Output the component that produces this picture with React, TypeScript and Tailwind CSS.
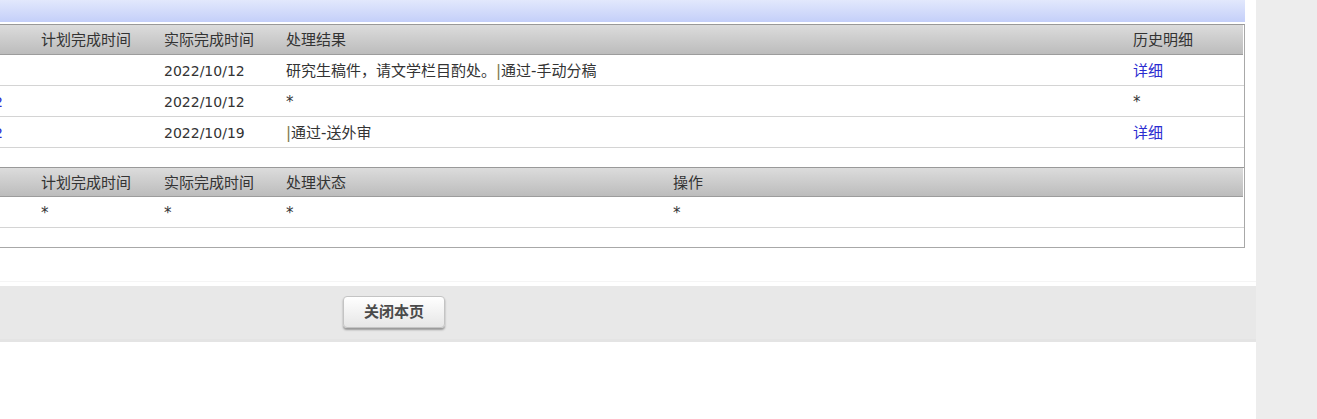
import React from "react";

const FONT = { fontFamily: '"DejaVu Sans", "Noto Sans CJK SC", sans-serif' };

const cols1 = "grid grid-cols-[41px_123px_122px_847px_1fr]";
const cols2 = "grid grid-cols-[41px_123px_122px_387px_1fr]";

function Clip({ text }: { text?: string }) {
  return (
    <div className="flex justify-end overflow-hidden whitespace-nowrap">
      {text ? <span className="mr-[38px] text-[14px] text-[#2b2bd0]">{text}</span> : null}
    </div>
  );
}

function Header({ cols, labels }: { cols: string; labels: string[] }) {
  return (
    <div
      className={`${cols} items-center pt-[2px] border-b border-[#9c9c9c] bg-gradient-to-b from-[#dcdcdc] to-[#bcbcbc] text-[#333] mr-[1px]`}
    >
      <div />
      {labels.map((l, i) => (
        <div key={i} className="whitespace-nowrap">
          {l}
        </div>
      ))}
    </div>
  );
}

export default function App() {
  const rows1 = [
    { left: "", actual: "2022/10/12", result: "研究生稿件，请文学栏目酌处。|通过-手动分稿", link: true },
    { left: "2022/10/12", actual: "2022/10/12", result: "*", link: false },
    { left: "2022/10/12", actual: "2022/10/19", result: "|通过-送外审", link: true },
  ];
  return (
    <div className="flex w-[1317px] h-[419px] bg-white overflow-hidden text-[15px] text-[#333]" style={FONT}>
      <div className="w-[1256px] flex flex-col">
        <div className="w-[1245px]">
          <div className="h-[22px] bg-gradient-to-b from-[#e2e8fc] to-[#c4cff9]" />
          <div className="h-[2px] bg-white" />
          <div className="border-t border-t-[#999] border-r border-r-[#a8a8a8] border-b border-b-[#a8a8a8]">
            {/* table 1 */}
            <Header cols={`${cols1} h-[30px]`} labels={["计划完成时间", "实际完成时间", "处理结果", "历史明细"]} />
            {rows1.map((r, i) => (
              <div key={i} className={`${cols1} h-[31px] items-center pt-[2px] border-b border-[#d4d4d4]`}>
                <Clip text={r.left} />
                <div />
                <div className="text-[14px]">{r.actual}</div>
                <div className="whitespace-nowrap">
                  {r.result.split("|").map((part, j) =>
                    j === 0 ? (
                      <span key={j}>{part}</span>
                    ) : (
                      <span key={j}>
                        <span className="text-[#7d7443]">|</span>
                        {part}
                      </span>
                    )
                  )}
                </div>
                <div className={r.link ? "text-[#2b2bd0]" : ""}>{r.link ? "详细" : "*"}</div>
              </div>
            ))}
            <div className="h-[19px]" />
            {/* table 2 */}
            <div className="border-t border-[#999]">
              <Header cols={`${cols2} h-[29px]`} labels={["计划完成时间", "实际完成时间", "处理状态", "操作"]} />
            </div>
            <div className={`${cols2} h-[31px] items-center pt-[2px] border-b border-[#d4d4d4]`}>
              <div />
              <div>*</div>
              <div>*</div>
              <div>*</div>
              <div>*</div>
            </div>
            <div className="h-[19px]" />
          </div>
        </div>
        <div className="h-[33px]" />
        <div className="h-[5px] border-t border-[#f5f5f5]" />
        <div className="h-[56px] bg-[#e8e8e8] flex items-start pt-[10px] border-b-[3px] border-[#e4e4e4]">
          <button className="ml-[343px] w-[102px] h-[32px] rounded-[4px] border border-[#c4c4c4] bg-gradient-to-b from-[#ffffff] to-[#e6e6e6] shadow-[0_2px_2px_rgba(0,0,0,0.35)] text-[15px] font-bold text-[#4a4a4a]">
            关闭本页
          </button>
        </div>
      </div>
      <div className="flex-1 bg-[#ededed]" />
    </div>
  );
}
